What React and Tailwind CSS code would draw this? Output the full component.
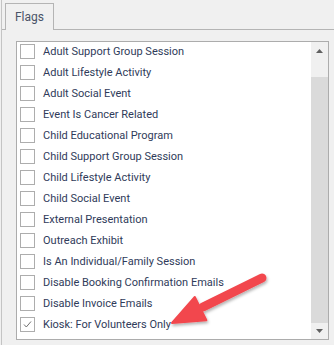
import React from 'react';

const flags = [
  { label: 'Adult Support Group Session' },
  { label: 'Adult Lifestyle Activity' },
  { label: 'Adult Social Event' },
  { label: 'Event Is Cancer Related' },
  { label: 'Child Educational Program' },
  { label: 'Child Support Group Session' },
  { label: 'Child Lifestyle Activity' },
  { label: 'Child Social Event' },
  { label: 'External Presentation' },
  { label: 'Outreach Exhibit' },
  { label: 'Is An Individual/Family Session' },
  { label: 'Disable Booking Confirmation Emails' },
  { label: 'Disable Invoice Emails' },
  { label: 'Kiosk: For Volunteers Only', checked: true },
];

function CheckBox({ checked }) {
  return (
    <span className="flex h-[15px] w-[15px] shrink-0 items-center justify-center border border-[#adadad] bg-white">
      {checked && (
        <svg width="11" height="11" viewBox="0 0 11 11">
          <path d="M2 5.5 L4.3 8 L9 2.5" fill="none" stroke="#707070" strokeWidth="1" />
        </svg>
      )}
    </span>
  );
}

export default function App() {
  return (
    <div
      className="relative h-[345px] w-[334px] overflow-hidden bg-[#f0f0f0] pl-px"
      style={{ fontFamily: 'Roboto, "Liberation Sans", Arial, sans-serif' }}
    >
      <div className="flex h-full flex-col border-l border-[#c4c4c4]">
        {/* Tab header */}
        <div className="flex h-[30px] items-end">
          <div className="h-full w-[3px] border-b border-[#b4b4b4]" />
          <div className="flex h-[27px] w-[49px] items-center justify-center border-x border-t border-[#b4b4b4] pb-[1px] text-[12px] text-[#4a5468]">
            Flags
          </div>
          <div className="h-full flex-1 border-b border-[#b4b4b4]" />
        </div>

        {/* Tab body */}
        <div className="pl-[14px] pt-[11px]">
          <div className="flex h-[299px] w-[313px] border border-[#acacac] bg-white">
            <div className="flex-1">
              {flags.map((f, i) => (
                <div key={i} className="h-[21px] pl-[3px] pt-[2px]">
                  <div className="flex h-[15px] items-center">
                    <CheckBox checked={f.checked} />
                    <span className="ml-[8px] whitespace-nowrap text-[11px] leading-none text-[#2f3b5a]">
                      {f.label}
                    </span>
                  </div>
                </div>
              ))}
            </div>

            {/* Scrollbar */}
            <div className="flex w-[17px] flex-col bg-[#f0f0f0]">
              <div className="flex h-[17px] items-center justify-center">
                <svg width="7" height="4" viewBox="0 0 7 4">
                  <path d="M3.5 0 L7 4 L0 4 Z" fill="#606060" />
                </svg>
              </div>
              <div className="h-[18px]" />
              <div className="h-[246px] bg-[#dadada]" />
              <div className="flex h-[16px] items-center justify-center">
                <svg width="7" height="4" viewBox="0 0 7 4">
                  <path d="M0 0 L7 0 L3.5 4 Z" fill="#606060" />
                </svg>
              </div>
            </div>
          </div>
        </div>
      </div>

      {/* Annotation arrow */}
      <svg className="pointer-events-none absolute left-0 top-0" width="334" height="345">
        <defs>
          <filter id="shadow" x="-20%" y="-20%" width="140%" height="140%">
            <feDropShadow dx="1" dy="2" stdDeviation="1.5" floodColor="#000" floodOpacity="0.3" />
          </filter>
        </defs>
        <g filter="url(#shadow)" fill="#f2474d" stroke="#f2474d">
          <line x1="262" y1="278" x2="203" y2="307" strokeWidth="9" strokeLinecap="round" />
          <polygon points="172,323 194.8,297 206.4,320.3" strokeWidth="2" strokeLinejoin="round" />
        </g>
      </svg>
    </div>
  );
}
